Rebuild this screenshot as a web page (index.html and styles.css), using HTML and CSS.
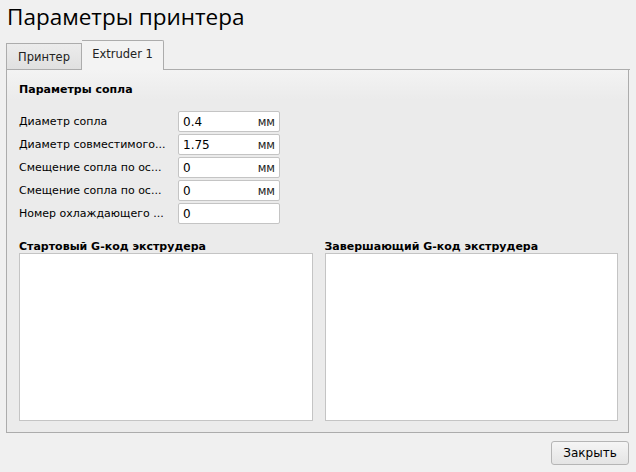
FILE: index.html
```html
<!DOCTYPE html>
<html>
<head>
<meta charset="utf-8">
<link rel="stylesheet" href="styles.css">
</head>
<body>
<div class="window">
  <h1 class="title">Параметры принтера</h1>
  <div class="tabs">
    <div class="tab">Принтер</div>
    <div class="tab active">Extruder 1</div>
    <div class="tab-fill"></div>
  </div>
  <div class="panel">
    <div class="section-title">Параметры сопла</div>
    <div class="form">
      <div class="row"><span class="label">Диаметр сопла</span><div class="field"><span>0.4</span><span class="unit">мм</span></div></div>
      <div class="row"><span class="label">Диаметр совместимого...</span><div class="field"><span>1.75</span><span class="unit">мм</span></div></div>
      <div class="row"><span class="label">Смещение сопла по ос...</span><div class="field"><span>0</span><span class="unit">мм</span></div></div>
      <div class="row"><span class="label">Смещение сопла по ос...</span><div class="field"><span>0</span><span class="unit">мм</span></div></div>
      <div class="row"><span class="label">Номер охлаждающего ...</span><div class="field"><span>0</span></div></div>
    </div>
    <div class="gcode">
      <div class="gcode-col">
        <div class="gcode-label">Стартовый G-код экструдера</div>
        <div class="textarea"></div>
      </div>
      <div class="gcode-col">
        <div class="gcode-label">Завершающий G-код экструдера</div>
        <div class="textarea"></div>
      </div>
    </div>
  </div>
  <div class="footer">
    <button class="btn">Закрыть</button>
  </div>
</div>
</body>
</html>
```
FILE: styles.css
```css
html, body {
  margin: 0;
  padding: 0;
  background: #f0f0f0;
}
body {
  width: 636px;
  height: 472px;
  overflow: hidden;
  font-family: "DejaVu Sans", sans-serif;
  font-size: 11px;
  color: #000;
}
.window {
  padding: 0 6px 0 6px;
}
.title {
  margin: 0;
  padding: 3px 0 0 1px;
  height: 37px;
  box-sizing: border-box;
  font-family: "Open Sans", "DejaVu Sans", sans-serif;
  font-weight: 400;
  font-size: 22.5px;
  line-height: 28px;
  color: #000;
}
.tabs {
  display: flex;
  align-items: flex-end;
  height: 33px;
}
.tab {
  width: 76px;
  height: 27px;
  box-sizing: border-box;
  display: flex;
  align-items: center;
  justify-content: center;
  border: 1px solid #acacac;
  background: linear-gradient(#ececec, #e0e0e0);
  color: #222;
  font-size: 11.5px;
}
.tab.active {
  width: 82px;
  height: 30px;
  border-left: none;
  border-bottom: none;
  background: #f3f3f3;
  border-radius: 0 2px 0 0;
  padding-bottom: 3px;
}
.tab-fill {
  flex: 1;
  border-bottom: 1px solid #acacac;
}
.panel {
  height: 363px;
  margin-right: 1px;
  box-sizing: border-box;
  border: 1px solid #acacac;
  border-top: none;
  background: linear-gradient(#f3f3f3, #ebebeb 30px);
  padding: 11px 10px 11px 12px;
  display: flex;
  flex-direction: column;
}
.section-title {
  font-weight: bold;
  height: 30px;
  padding-top: 2px;
  box-sizing: border-box;
}
.form {
  display: flex;
  flex-direction: column;
  gap: 2px;
}
.row {
  display: flex;
  align-items: center;
  height: 21px;
}
.label {
  width: 159px;
}
.field {
  width: 102px;
  height: 21px;
  box-sizing: border-box;
  background: #fff;
  border: 1px solid #c4c4c4;
  border-radius: 2px;
  display: flex;
  align-items: center;
  justify-content: space-between;
  padding: 0 4px 0 4px;
  font-size: 12px;
}
.unit {
  font-size: 11.5px;
  color: #222;
}
.gcode {
  margin-top: 17px;
  flex: 1;
  display: flex;
  gap: 12px;
}
.gcode-col {
  flex: 1;
  display: flex;
  flex-direction: column;
}
.gcode-label {
  font-weight: bold;
  height: 12px;
  line-height: 12px;
}
.textarea {
  flex: 1;
  background: #fff;
  border: 1px solid #c4c4c4;
}
.footer {
  display: flex;
  justify-content: flex-end;
  padding-top: 8px;
  padding-right: 1px;
}
.btn {
  width: 78px;
  height: 24px;
  font-family: "DejaVu Sans", sans-serif;
  font-size: 12px;
  color: #000;
  background: linear-gradient(#f5f5f5, #e4e4e4);
  border: 1px solid #b5b5b5;
  border-radius: 3px;
  padding: 0;
}
```
